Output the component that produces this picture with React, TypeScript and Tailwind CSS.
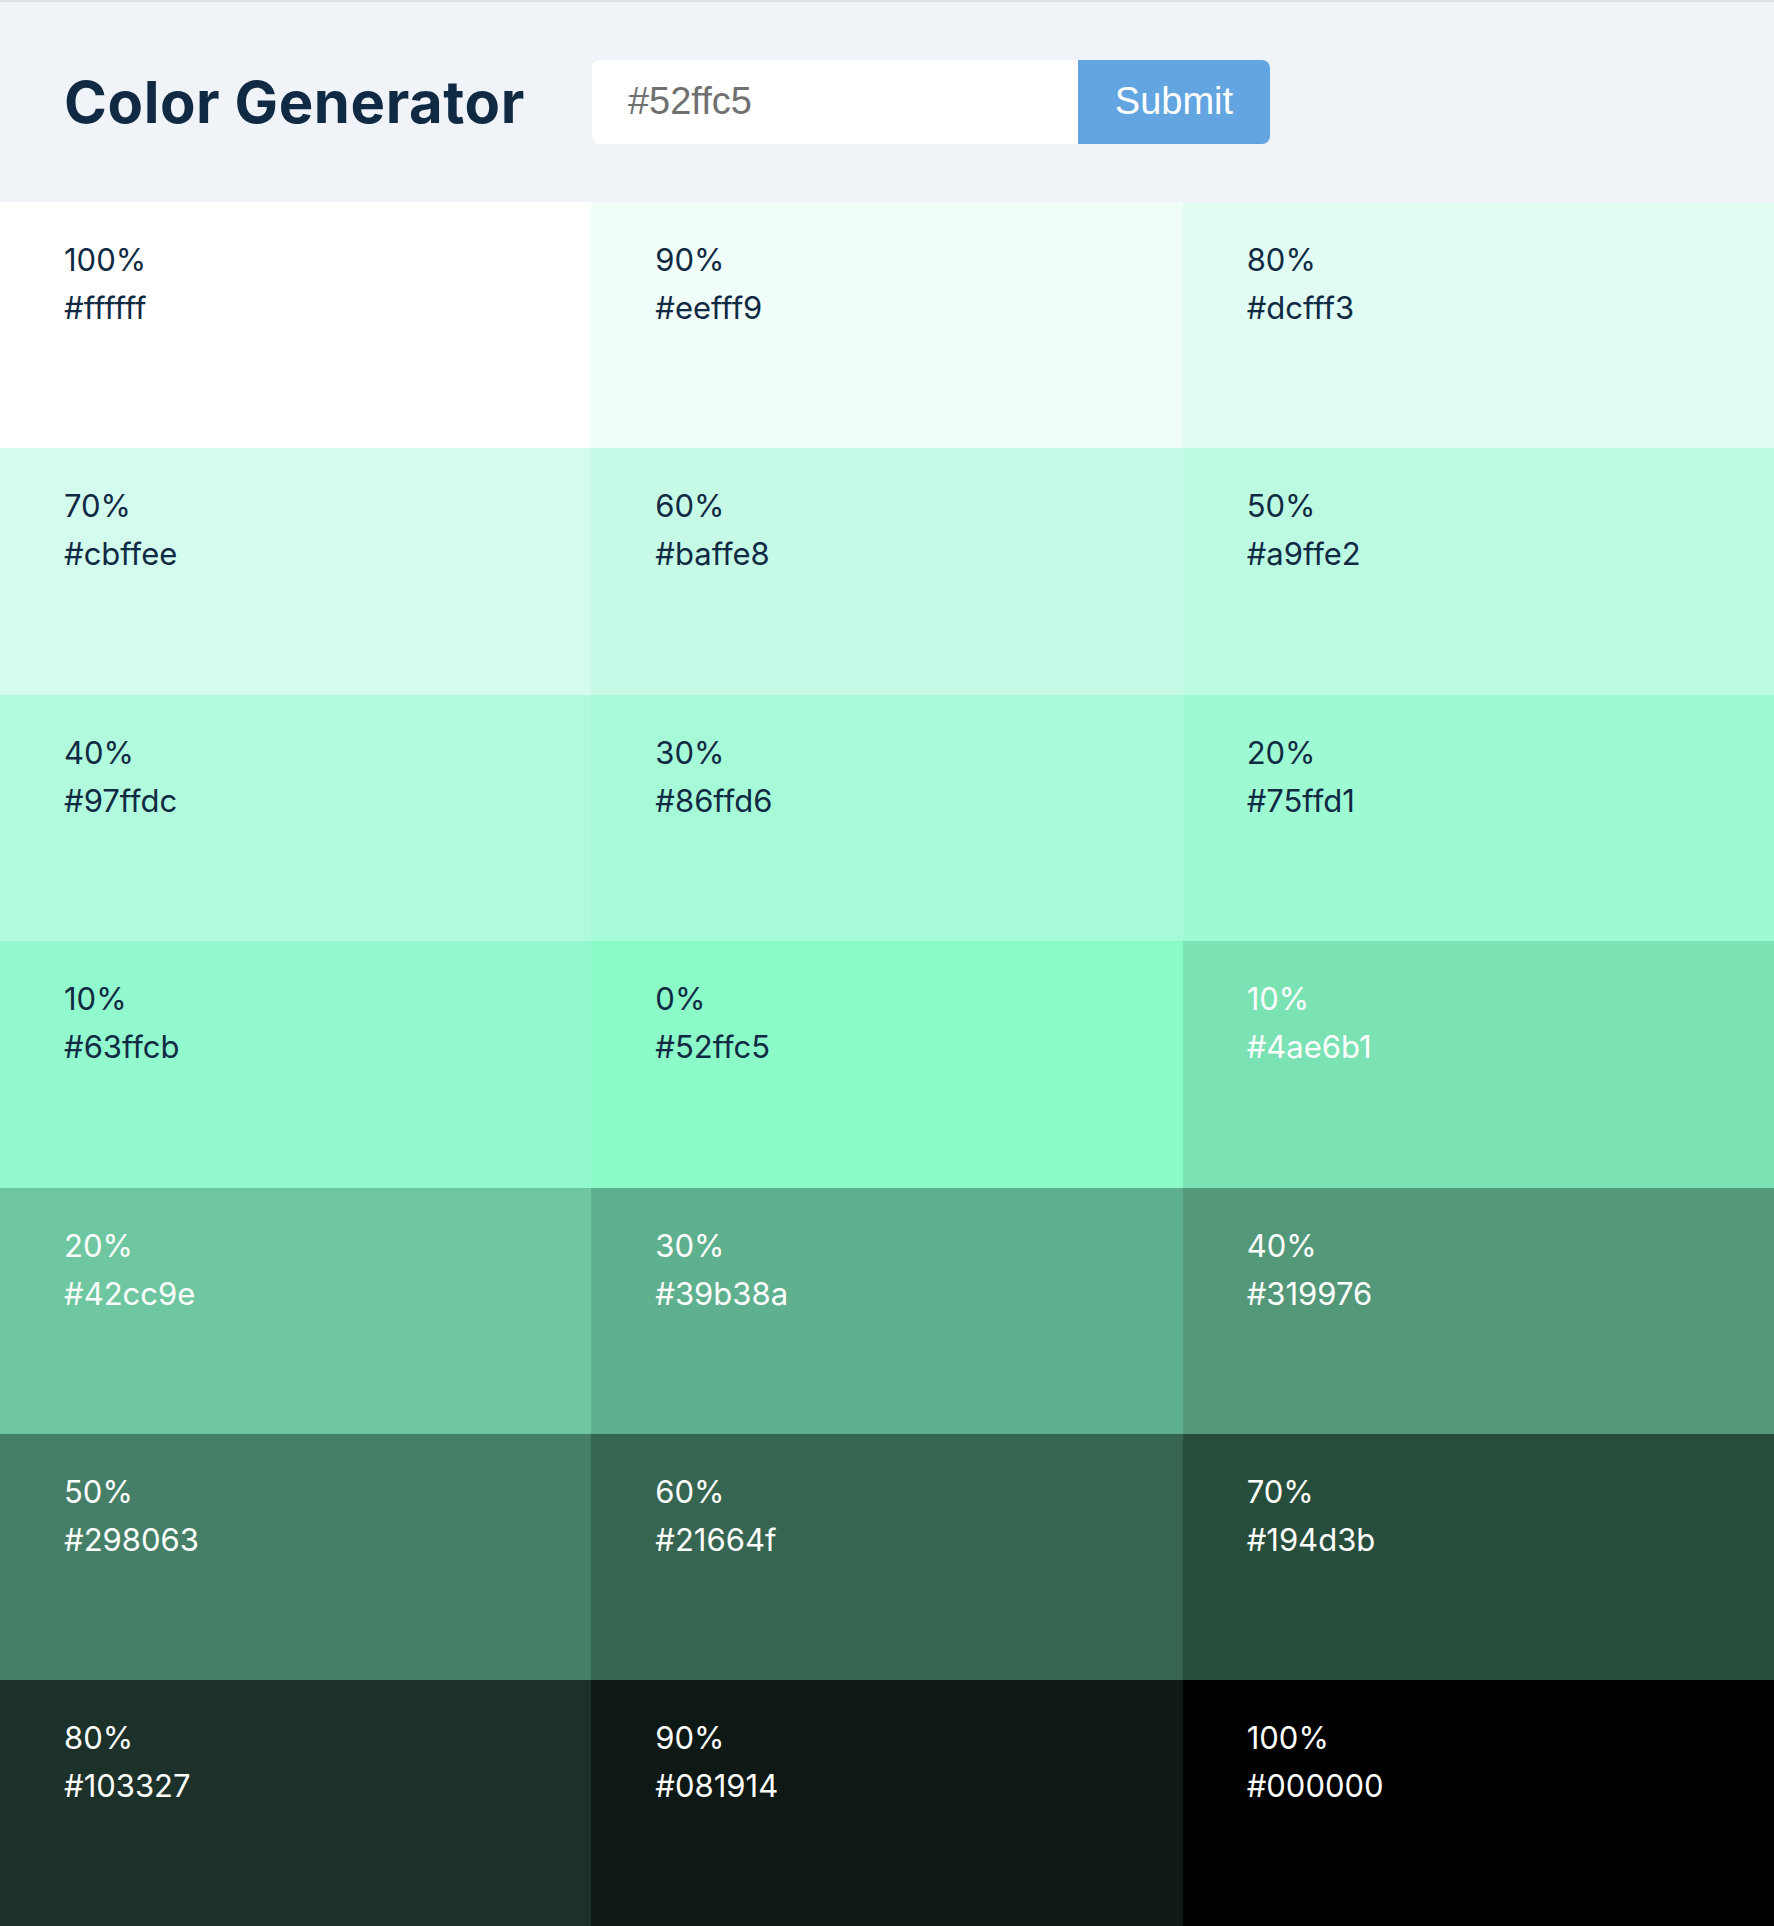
import React from 'react';

type Swatch = { weight: string; hex: string; bg: string; light: boolean };

// bg values are the colours as they appear on screen; hex is what the page prints
const swatches: Swatch[] = [
  { weight: '100%', hex: '#ffffff', bg: '#ffffff', light: false },
  { weight: '90%', hex: '#eefff9', bg: '#f0fdf8', light: false },
  { weight: '80%', hex: '#dcfff3', bg: '#e1fdf3', light: false },
  { weight: '70%', hex: '#cbffee', bg: '#d3fcee', light: false },
  { weight: '60%', hex: '#baffe8', bg: '#c6fae6', light: false },
  { weight: '50%', hex: '#a9ffe2', bg: '#bcfbe2', light: false },
  { weight: '40%', hex: '#97ffdc', bg: '#b1fadd', light: false },
  { weight: '30%', hex: '#86ffd6', bg: '#a7fad7', light: false },
  { weight: '20%', hex: '#75ffd1', bg: '#9dfad3', light: false },
  { weight: '10%', hex: '#63ffcb', bg: '#91f9cd', light: false },
  { weight: '0%', hex: '#52ffc5', bg: '#8bf9c8', light: false },
  { weight: '10%', hex: '#4ae6b1', bg: '#7be2b4', light: true },
  { weight: '20%', hex: '#42cc9e', bg: '#6ec7a1', light: true },
  { weight: '30%', hex: '#39b38a', bg: '#5fb08e', light: true },
  { weight: '40%', hex: '#319976', bg: '#54987a', light: true },
  { weight: '50%', hex: '#298063', bg: '#457f67', light: true },
  { weight: '60%', hex: '#21664f', bg: '#366551', light: true },
  { weight: '70%', hex: '#194d3b', bg: '#274e3d', light: true },
  { weight: '80%', hex: '#103327', bg: '#1c3129', light: true },
  { weight: '90%', hex: '#081914', bg: '#0e1814', light: true },
  { weight: '100%', hex: '#000000', bg: '#000000', light: true },
];

const App: React.FC = () => {
  return (
    <div className="min-h-screen bg-white border-t-2 border-[#dcdfe4]" style={{ fontFamily: 'Inter, "Noto Sans", sans-serif' }}>
      <header className="h-[200px] bg-[#f0f4f8] flex items-center pl-16">
        <h1 className="text-[58px] font-bold tracking-[0.01em] text-[#102a43] leading-none">Color Generator</h1>
        <form className="flex ml-[67px] -mt-[1px]" onSubmit={(e) => e.preventDefault()}>
          <input
            type="text"
            placeholder="#52ffc5"
            className="w-[486px] h-[84px] bg-white rounded-l-lg pl-9 text-[38px] text-[#707070] placeholder:text-[#707070] outline-none"
            style={{ fontFamily: '"Liberation Sans", Arial, sans-serif' }}
          />
          <button
            type="submit"
            className="w-[192px] h-[84px] bg-[#62a5e1] rounded-r-lg text-white text-[38px]"
            style={{ fontFamily: '"Liberation Sans", Arial, sans-serif' }}
          >
            Submit
          </button>
        </form>
      </header>

      <section className="grid grid-cols-3">
        {swatches.map((s, idx) => (
          <article
            key={idx}
            className={`h-[246.4px] pl-16 pt-[34px] text-[31px] leading-[48px] ${s.light ? 'text-white' : 'text-[#102a43]'}`}
            style={{ backgroundColor: s.bg }}
          >
            <p>{s.weight}</p>
            <p>{s.hex}</p>
          </article>
        ))}
      </section>
    </div>
  );
};

export default App;
